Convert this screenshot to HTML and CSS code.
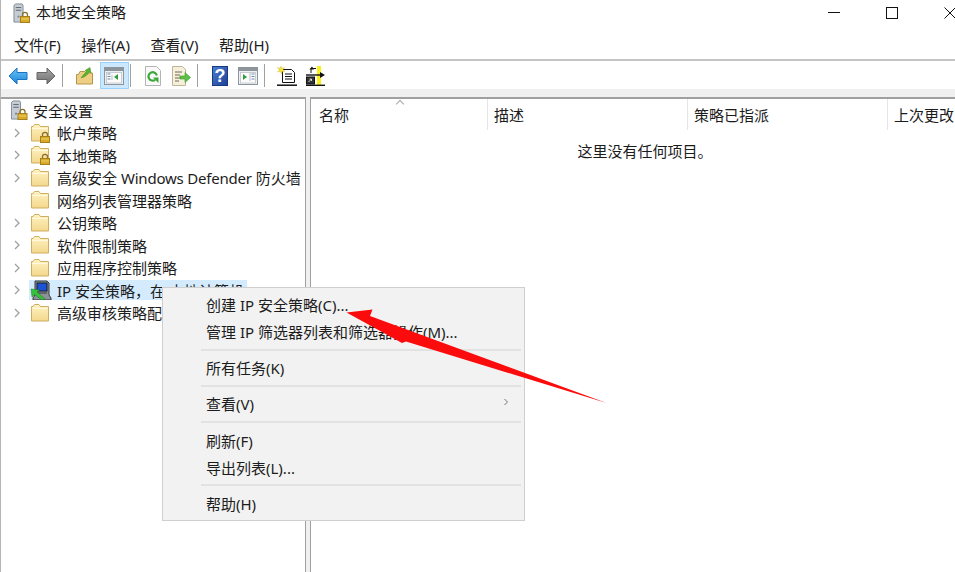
FILE: index.html
```html
<!DOCTYPE html>
<html lang="zh-CN">
<head>
  <meta charset="UTF-8">
  <meta name="viewport" content="width=device-width, initial-scale=1.0">
  <title>本地安全策略</title>
  <link rel="stylesheet" href="styles.css">
</head>
<body>
  <svg class="sprite" aria-hidden="true">
    <defs>
      <linearGradient id="gradFolder" x1="0" y1="0" x2="0" y2="1">
        <stop offset="0" stop-color="#fff3c4"/>
        <stop offset="1" stop-color="#f3d78c"/>
      </linearGradient>
      <linearGradient id="gradBlue" x1="0" y1="0" x2="0" y2="1">
        <stop offset="0" stop-color="#6cc4f5"/>
        <stop offset="1" stop-color="#1b84d8"/>
      </linearGradient>
      <linearGradient id="gradGrey" x1="0" y1="0" x2="0" y2="1">
        <stop offset="0" stop-color="#a8a8a8"/>
        <stop offset="1" stop-color="#6f6f6f"/>
      </linearGradient>
      <linearGradient id="gradHelp" x1="0" y1="0" x2="1" y2="1">
        <stop offset="0" stop-color="#4f7fd0"/>
        <stop offset="1" stop-color="#1c3f94"/>
      </linearGradient>
      <symbol id="folder" viewBox="0 0 20 20">
        <path d="M1.5 5.5V18h17V3.5h-8l-1.5-2H4.5L3 3.5H1.5z" fill="url(#gradFolder)" stroke="#cfae62"/>
        <path d="M2.5 5.5h15" stroke="#fff9e0"/>
      </symbol>
      <symbol id="lock" viewBox="0 0 12 12">
        <path d="M3.5 6V3.8a2.5 2.5 0 0 1 5 0V6" fill="none" stroke="#8a6f2d" stroke-width="1.3"/>
        <rect x="1.5" y="5.5" width="9" height="6" fill="#d9a928" stroke="#a67f1d"/>
        <path d="M2 8h8" stroke="#f2cf69"/>
      </symbol>
      <symbol id="server" viewBox="0 0 12 22">
        <path d="M1 2.5 3 1h7l1 1.500V21H1z" fill="#c6ccd3" stroke="#7d8791"/>
        <path d="M3 5h6M3 8h6" stroke="#56606b"/>
        <circle cx="6" cy="15" r="1.2" fill="#7d8791"/>
      </symbol>
      <symbol id="win-pane" viewBox="0 0 20 18">
        <rect x="0.5" y="0.5" width="19" height="17" fill="#eef1f4" stroke="#8c949c"/>
        <rect x="1" y="1" width="18" height="3" fill="#8c949c"/>
        <rect x="2.5" y="5.5" width="15" height="10.5" fill="#fbfbfb" stroke="#b7bcc2" stroke-width="0.7"/>
      </symbol>
    </defs>
  </svg>

  <div class="window">
    <header class="titlebar">
      <svg class="title-icon" viewBox="0 0 18 20">
        <use href="#server" x="0" y="0" width="11" height="20"/>
        <use href="#lock" x="6" y="8" width="12" height="12"/>
      </svg>
      <span class="title-text">本地安全策略</span>
      <div class="win-controls">
        <button class="win-btn">
          <svg viewBox="0 0 12 12"><path d="M0 5.5h12" stroke="#111"/></svg>
        </button>
        <button class="win-btn">
          <svg viewBox="0 0 12 12"><rect x="0.5" y="0.5" width="11" height="11" fill="none" stroke="#111"/></svg>
        </button>
        <button class="win-btn">
          <svg viewBox="0 0 12 12"><path d="M0.5 0.5l11 11M11.5 0.5l-11 11" stroke="#111"/></svg>
        </button>
      </div>
    </header>

    <nav class="menubar">
      <span class="menu-item">文件(F)</span>
      <span class="menu-item">操作(A)</span>
      <span class="menu-item">查看(V)</span>
      <span class="menu-item">帮助(H)</span>
    </nav>

    <div class="toolbar">
      <button class="tool-btn">
        <svg viewBox="0 0 20 18"><path d="M9 1 1 9l8 8v-4.5h10v-7H9z" fill="url(#gradBlue)" stroke="#1a74c4"/></svg>
      </button>
      <button class="tool-btn">
        <svg viewBox="0 0 20 18"><path d="M11 1l8 8-8 8v-4.5H1v-7h10z" fill="url(#gradGrey)" stroke="#666"/></svg>
      </button>
      <span class="tool-sep"></span>
      <button class="tool-btn">
        <svg viewBox="0 0 20 18">
          <path d="M1.5 7.5V17h16V6h-6l-1.5-1.5H5L3.5 7.5z" fill="#edce82" stroke="#b8954a"/>
          <path d="M6 11C8 8 10 6 11.5 4.5L10 3.5 15 0.5l1 5.5-1.800-1C13 7.5 10 10 6 11z" fill="#58b32f" stroke="#3d8f1f" stroke-width="0.5"/>
        </svg>
      </button>
      <button class="tool-btn is-active">
        <svg viewBox="0 0 20 18">
          <use href="#win-pane" width="20" height="18"/>
          <path d="M3.5 7h3M3.5 9.5h3M3.5 12h3" stroke="#6d8bb0"/>
          <path d="M8 8v5" stroke="#b7bcc2"/>
          <path d="M14 7v6l-4-3z" fill="#2f9e3b"/>
        </svg>
      </button>
      <span class="tool-sep"></span>
      <button class="tool-btn">
        <svg viewBox="0 0 18 20">
          <path d="M1.5 0.5h11l4 4v15h-15z" fill="#fafafa" stroke="#b4b4b4"/>
          <path d="M12.8 9.5a4.2 4.2 0 1 0-1.600 4.300" fill="none" stroke="#3ba83a" stroke-width="2.2"/>
          <path d="M9 11.5h5.5V17z" fill="#3ba83a"/>
        </svg>
      </button>
      <button class="tool-btn">
        <svg viewBox="0 0 20 20">
          <path d="M1.5 0.5h10l3 3v16h-13z" fill="#f6efd9" stroke="#bdb59a"/>
          <path d="M4 6h7M4 9h5M4 12h5M4 15h4" stroke="#6a6a5a"/>
          <path d="M9 10h5V6.5l5.5 5-5.500 5V13H9z" fill="#5cc04a" stroke="#3c9a2d" stroke-width="0.6"/>
        </svg>
      </button>
      <span class="tool-sep"></span>
      <button class="tool-btn">
        <svg viewBox="0 0 16 20">
          <rect x="0.5" y="0.5" width="15" height="19" fill="url(#gradHelp)" stroke="#173a86"/>
          <text x="8" y="16" class="help-mark">?</text>
        </svg>
      </button>
      <button class="tool-btn">
        <svg viewBox="0 0 20 18">
          <use href="#win-pane" width="20" height="18"/>
          <path d="M5 7v6l4-3z" fill="#2f9e3b"/>
          <path d="M12 6v8" stroke="#b7bcc2"/>
          <path d="M13.5 7h3M13.5 9.5h3M13.5 12h3" stroke="#6d8bb0"/>
        </svg>
      </button>
      <span class="tool-sep"></span>
      <button class="tool-btn">
        <svg viewBox="0 0 20 20">
          <path d="M5.5 3.5h9l3 3v10h-12z" fill="#fff" stroke="#111"/>
          <path d="M8 8h7M8 10.5h7M8 13h7" stroke="#111"/>
          <path d="M0 19.2h20" stroke="#111" stroke-width="1.5"/>
          <path d="M4 0l0.9 2.4L7.5 1.5 6 3.8l2 1.500-2.600 0.1L4.5 8 3.5 5.5 0.5 6 2.5 4 0.5 1.5 3.2 2.3z" fill="#f4e23a" stroke="#b9a417" stroke-width="0.3"/>
        </svg>
      </button>
      <button class="tool-btn">
        <svg viewBox="0 0 20 20">
          <rect x="12" y="0" width="4" height="20" fill="#fbf017"/>
          <path d="M1 19.3h19" stroke="#111" stroke-width="1.4"/>
          <path d="M1 9h14" stroke="#111" stroke-width="1.4"/>
          <path d="M15 6l5 3-5 3z" fill="#111"/>
          <path d="M6 7V2.5h5" fill="none" stroke="#111"/>
          <path d="M4.5 3.5 7 0.5 9 3.5z" fill="#111"/>
          <rect x="1.5" y="11" width="8" height="7" fill="#333" stroke="#111"/>
          <path d="M3.5 16l3-3M4.5 13h2v2" fill="none" stroke="#fff" stroke-width="0.8"/>
        </svg>
      </button>
    </div>

    <div class="strip"></div>

    <div class="panes">
      <aside class="tree-pane">
        <div class="tree-root">
          <svg class="root-icon" viewBox="0 0 18 20">
            <use href="#server" x="0" y="0" width="11" height="20"/>
            <use href="#lock" x="6" y="8" width="12" height="12"/>
          </svg>
          <span>安全设置</span>
        </div>

        <div class="tree-row">
          <svg class="chevron" viewBox="0 0 8 10"><path d="M2 1l4 4-4 4" fill="none" stroke="#a0a0a0" stroke-width="1.3"/></svg>
          <span class="tree-label">
            <svg class="tree-icon" viewBox="-1 0 24 20"><use href="#folder" width="20" height="20"/><use href="#lock" x="9" y="8" width="12" height="12"/></svg>
            <span>帐户策略</span>
          </span>
        </div>
        <div class="tree-row">
          <svg class="chevron" viewBox="0 0 8 10"><path d="M2 1l4 4-4 4" fill="none" stroke="#a0a0a0" stroke-width="1.3"/></svg>
          <span class="tree-label">
            <svg class="tree-icon" viewBox="-1 0 24 20"><use href="#folder" width="20" height="20"/><use href="#lock" x="9" y="8" width="12" height="12"/></svg>
            <span>本地策略</span>
          </span>
        </div>
        <div class="tree-row">
          <svg class="chevron" viewBox="0 0 8 10"><path d="M2 1l4 4-4 4" fill="none" stroke="#a0a0a0" stroke-width="1.3"/></svg>
          <span class="tree-label">
            <svg class="tree-icon" viewBox="-1 0 24 20"><use href="#folder" width="20" height="20"/></svg>
            <span>高级安全 <span class="latin-tight">Windows Defender</span> 防火墙</span>
          </span>
        </div>
        <div class="tree-row">
          <span class="chevron"></span>
          <span class="tree-label">
            <svg class="tree-icon" viewBox="-1 0 24 20"><use href="#folder" width="20" height="20"/></svg>
            <span>网络列表管理器策略</span>
          </span>
        </div>
        <div class="tree-row">
          <svg class="chevron" viewBox="0 0 8 10"><path d="M2 1l4 4-4 4" fill="none" stroke="#a0a0a0" stroke-width="1.3"/></svg>
          <span class="tree-label">
            <svg class="tree-icon" viewBox="-1 0 24 20"><use href="#folder" width="20" height="20"/></svg>
            <span>公钥策略</span>
          </span>
        </div>
        <div class="tree-row">
          <svg class="chevron" viewBox="0 0 8 10"><path d="M2 1l4 4-4 4" fill="none" stroke="#a0a0a0" stroke-width="1.3"/></svg>
          <span class="tree-label">
            <svg class="tree-icon" viewBox="-1 0 24 20"><use href="#folder" width="20" height="20"/></svg>
            <span>软件限制策略</span>
          </span>
        </div>
        <div class="tree-row">
          <svg class="chevron" viewBox="0 0 8 10"><path d="M2 1l4 4-4 4" fill="none" stroke="#a0a0a0" stroke-width="1.3"/></svg>
          <span class="tree-label">
            <svg class="tree-icon" viewBox="-1 0 24 20"><use href="#folder" width="20" height="20"/></svg>
            <span>应用程序控制策略</span>
          </span>
        </div>
        <div class="tree-row">
          <svg class="chevron" viewBox="0 0 8 10"><path d="M2 1l4 4-4 4" fill="none" stroke="#a0a0a0" stroke-width="1.3"/></svg>
          <span class="tree-label is-selected">
            <svg class="tree-icon" viewBox="-1 0 24 20">
              <path d="M5 1h12l2 2v12l2 3v2H3v-2l2-3z" fill="#8d9296" stroke="#34393d"/>
              <rect x="7" y="3" width="10" height="8" fill="#1c52d6" stroke="#14202e"/>
              <path d="M7 13h10" stroke="#34393d"/>
              <path d="M15 19 7 12l2.5-2L1 9l1 8 2.5-2.5L12 20z" fill="#35c13a" stroke="#1d7a20" stroke-width="0.5"/>
            </svg>
            <span>IP 安全策略，在 本地计算机</span>
          </span>
        </div>
        <div class="tree-row">
          <svg class="chevron" viewBox="0 0 8 10"><path d="M2 1l4 4-4 4" fill="none" stroke="#a0a0a0" stroke-width="1.3"/></svg>
          <span class="tree-label">
            <svg class="tree-icon" viewBox="-1 0 24 20"><use href="#folder" width="20" height="20"/></svg>
            <span>高级审核策略配置</span>
          </span>
        </div>
      </aside>

      <main class="list-pane">
        <div class="list-header">
          <div class="col col-name">名称<span class="sort-mark"></span></div>
          <div class="col col-desc">描述</div>
          <div class="col col-policy">策略已指派</div>
          <div class="col col-changed">上次更改</div>
        </div>
        <p class="list-empty">这里没有任何项目。</p>
      </main>
    </div>
  </div>

  <div class="context-menu">
    <div class="ctx-item">创建 IP 安全策略(C)...</div>
    <div class="ctx-item">管理 IP 筛选器列表和筛选器操作(M)...</div>
    <div class="ctx-sep"></div>
    <div class="ctx-item">所有任务(K)</div>
    <div class="ctx-sep"></div>
    <div class="ctx-item">查看(V)
      <svg class="ctx-arrow" viewBox="0 0 6 8"><path d="M1.5 1l3 3-3 3" fill="none" stroke="#777"/></svg>
    </div>
    <div class="ctx-sep"></div>
    <div class="ctx-item">刷新(F)</div>
    <div class="ctx-item">导出列表(L)...</div>
    <div class="ctx-sep"></div>
    <div class="ctx-item">帮助(H)</div>
  </div>

  <!-- red annotation arrow drawn on top of the screenshot -->
  <svg class="annotation" viewBox="0 0 955 572">
    <path d="M346.5 312.5 372.5 309.5 370 316 606.5 403 406 341.5 402 343z" fill="#fb0b0b"/>
  </svg>
</body>
</html>
```

FILE: styles.css
```css
* {
  box-sizing: border-box;
}
html, body {
  height: 100%;
}
body {
  margin: 0;
  overflow: hidden;
  position: relative;
  background-color: #fff;
  color: #1c1c1c;
  font-family: "Noto Sans", "Noto Sans CJK SC", sans-serif;
  font-size: 15px;
}
button {
  padding: 0;
  border: none;
  background: none;
  font: inherit;
}
.sprite {
  position: absolute;
  width: 0;
  height: 0;
}
.window {
  display: flex;
  flex-direction: column;
  height: 100%;
  border-left: 1px solid #b5b5b5;
}

/* title bar */
.titlebar {
  display: flex;
  flex: none;
  align-items: center;
  height: 25px;
  padding-left: 12px;
}
.title-icon {
  width: 18px;
  height: 20px;
  margin-right: 5px;
}
.title-text {
  line-height: 25px;
}
.win-controls {
  display: flex;
  margin-left: auto;
  margin-right: -24px;
}
.win-btn {
  display: flex;
  align-items: center;
  justify-content: center;
  width: 58px;
  height: 25px;
}
.win-btn svg {
  width: 12px;
  height: 12px;
}

/* menu */
.menubar {
  display: flex;
  flex: none;
  align-items: center;
  gap: 20.5px;
  height: 36px;
  padding: 6px 0 0 13px;
  border-bottom: 2px solid #c4c4c4;
}
.menu-item {
  line-height: 22px;
}

/* toolbar */
.toolbar {
  display: flex;
  flex: none;
  align-items: center;
  height: 28px;
  padding: 1px 0 0 2.5px;
}
.tool-btn {
  display: flex;
  align-items: center;
  justify-content: center;
  width: 28.5px;
  height: 27px;
}
.tool-btn svg {
  width: 20px;
  height: 20px;
}
.tool-btn.is-active {
  width: 29px;
  margin-left: 0.5px;
  background-color: #cce8ff;
  border: 1px solid #99d1ff;
}
.tool-sep {
  width: 1px;
  height: 23px;
  margin: 0 8px 0 1px;
  background-color: #a0a0a0;
}
.help-mark {
  fill: #fff;
  font-family: "Liberation Sans", sans-serif;
  font-size: 18px;
  font-weight: bold;
  text-anchor: middle;
}
.strip {
  flex: none;
  height: 8px;
  background-color: #f0f0f0;
}

/* panes */
.panes {
  display: flex;
  flex: 1;
  gap: 4px;
  min-height: 0;
  margin-right: -24px;
  background-color: #f0f0f0;
}
.tree-pane {
  flex: none;
  width: 305px;
  background-color: #fff;
  border-top: 2px solid #a0a0a0;
  border-right: 1px solid #a0a0a0;
  overflow: hidden;
}
.tree-root, .tree-row {
  display: flex;
  align-items: center;
  height: 22.5px;
  white-space: nowrap;
}
.tree-root {
  padding-left: 9px;
}
.root-icon {
  width: 19px;
  height: 20px;
  margin-right: 4px;
}
.tree-row {
  padding-left: 12px;
}
.chevron {
  flex: none;
  width: 8px;
  height: 10px;
  margin-right: 8px;
}
.tree-label {
  display: flex;
  align-items: center;
  height: 20px;
  padding-right: 3px;
}
.tree-label.is-selected {
  background-color: #d4ebfd;
}
.tree-icon {
  width: 24px;
  height: 20px;
  margin-right: 4px;
}
.latin-tight {
  letter-spacing: -0.2px;
}

/* list */
.list-pane {
  flex: 1;
  min-width: 0;
  background-color: #fff;
  border-top: 2px solid #a0a0a0;
  border-left: 1px solid #a0a0a0;
}
.list-header {
  display: flex;
  height: 31px;
  overflow: hidden;
}
.col {
  flex: none;
  padding: 3px 0 0 6px;
  line-height: 26px;
  border-right: 1px solid #e6e6e6;
  white-space: nowrap;
}
.col-name {
  position: relative;
  width: 177px;
  padding-left: 8px;
}
.col-desc {
  width: 200px;
}
.col-policy {
  width: 200px;
}
.col-changed {
  width: 120px;
  border-right: none;
}
.sort-mark {
  position: absolute;
  left: 86px;
  top: 2px;
  width: 6px;
  height: 6px;
  border-top: 1px solid #a8a8a8;
  border-left: 1px solid #a8a8a8;
  transform: rotate(45deg);
}
.list-empty {
  margin: 10px 0 0;
  line-height: 22px;
  text-align: center;
}

/* context menu */
.context-menu {
  position: absolute;
  left: 162px;
  top: 287px;
  width: 363px;
  padding: 3px 3px 3px 38px;
  background-color: #f2f2f2;
  border: 1px solid #cfcfcf;
}
.ctx-item {
  display: flex;
  align-items: center;
  justify-content: space-between;
  height: 27px;
  padding: 0 12px 0 5px;
}
.ctx-arrow {
  width: 6px;
  height: 8px;
  margin-top: -4px;
}
.ctx-sep {
  height: 2px;
  margin: 3.6px 0;
  background-color: #e2e2e2;
}
.annotation {
  position: absolute;
  left: 0;
  top: 0;
  width: 955px;
  height: 572px;
  pointer-events: none;
}
```
